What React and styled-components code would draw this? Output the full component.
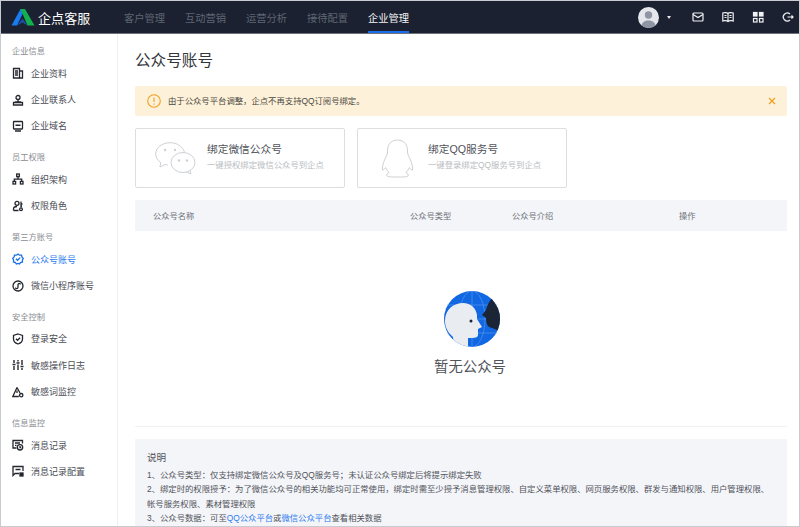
import React from "react";
import styled, { createGlobalStyle } from "styled-components";

const Global = createGlobalStyle`
  html, body { margin: 0; padding: 0; background: #fff; }
  * { box-sizing: border-box; }
  body { font-family: "Liberation Sans", "Noto Sans CJK SC", sans-serif; }
`;

const Frame = styled.div`
  width: 800px;
  height: 527px;
  border: 1px solid #c9cbd0;
  display: flex;
  flex-direction: column;
  overflow: hidden;
`;

const Header = styled.header`
  height: 33px;
  flex: none;
  background: #1b2130;
  display: flex;
  align-items: stretch;
  border-bottom: 1px solid #6d7079;
`;

const Brand = styled.div`
  width: 123px;
  display: flex;
  align-items: center;
  padding-left: 10px;
  gap: 3px;
  color: #fff;
  font-size: 13px;
  letter-spacing: 0.1px;
`;

const Nav = styled.nav`
  display: flex;
  gap: 20px;
`;

const NavItem = styled.div`
  display: flex;
  align-items: center;
  width: 41px;
  justify-content: center;
  font-size: 10.25px;
  white-space: nowrap;
  color: ${(p) => (p.$active ? "#f2f3f5" : "#5f6673")};
  box-shadow: ${(p) => (p.$active ? "inset 0 -2px 0 #1a6fe8" : "none")};
`;

const HeaderRight = styled.div`
  margin-left: auto;
  padding-right: 3px;
  display: flex;
  align-items: center;
  color: #fff;
`;

const Avatar = styled.div`
  width: 21px;
  height: 21px;
  border-radius: 50%;
  overflow: hidden;
  background: #e4e6ec;
`;

const Caret = styled.div`
  width: 0;
  height: 0;
  margin: 0 21px 0 8px;
  border-left: 2.5px solid transparent;
  border-right: 2.5px solid transparent;
  border-top: 3px solid #e8e8e8;
`;

const HeadIcon = styled.svg`
  width: 12px;
  height: 12px;
  margin-right: 18px;
  fill: none;
  stroke: #f0f1f3;
  stroke-width: 1.2;
  &:last-child { margin-right: 2px; }
`;

const Body = styled.div`
  flex: 1;
  min-height: 0;
  display: flex;
`;

const Sidebar = styled.aside`
  width: 117px;
  flex: none;
  border-right: 1px solid #eeeff2;
  padding-top: 8px;
`;

const Group = styled.section`
  margin-bottom: 9px;
`;

const GroupLabel = styled.div`
  height: 18px;
  line-height: 20px;
  padding-left: 11px;
  font-size: 8.25px;
  color: #8a8d94;
`;

const Item = styled.div`
  height: 26.4px;
  display: flex;
  align-items: center;
  gap: 7px;
  padding-left: 11px;
  font-size: 9px;
  color: ${(p) => (p.$active ? "#2f7cf0" : "#4a4d55")};
`;

const ItemIcon = styled.svg`
  width: 12px;
  height: 12px;
  flex: none;
  fill: none;
  stroke: ${(p) => (p.$active ? "#1a6fe8" : "#24272e")};
  stroke-width: 1.3;
`;

const Main = styled.main`
  flex: 1;
  min-width: 0;
  padding: 14px 12px 0 17px;
  display: flex;
  flex-direction: column;
`;

const Title = styled.h1`
  margin: 0;
  height: 25px;
  line-height: 25px;
  font-size: 15.6px;
  font-weight: 400;
  color: #33363d;
`;

const Alert = styled.div`
  margin-top: 13px;
  height: 30px;
  flex: none;
  background: #fdf1da;
  border-radius: 2px;
  display: flex;
  align-items: center;
  padding: 0 11px 0 12px;
  gap: 7px;
  font-size: 8.35px;
  color: #4a4840;
`;

const AlertText = styled.span`
  margin-top: -2px;
`;

const AlertClose = styled.svg`
  margin-left: auto;
  width: 8px;
  height: 8px;
  stroke: #f0a020;
  stroke-width: 1.3;
`;

const Cards = styled.div`
  margin-top: 12px;
  display: flex;
  gap: 12px;
`;

const Card = styled.div`
  width: 210px;
  height: 60px;
  border: 1px solid #dcdee2;
  border-radius: 2px;
  display: flex;
  align-items: center;
  padding-left: ${(p) => p.$pad}px;
  gap: ${(p) => p.$gap}px;
`;

const CardText = styled.div`
  padding-bottom: 4px;
`;

const CardTitle = styled.div`
  font-size: 10.7px;
  line-height: 15px;
  color: #50535a;
`;

const CardSub = styled.div`
  margin-top: 2px;
  font-size: 8.35px;
  line-height: 12px;
  color: #b9bcc2;
  white-space: nowrap;
`;

const TableHead = styled.div`
  margin-top: 12px;
  height: 31px;
  flex: none;
  background: #f4f5f9;
  display: grid;
  grid-template-columns: 257px 102px 167px 1fr;
  align-items: center;
  padding: 0 0 2px 18px;
  font-size: 8.25px;
  color: #6c6f76;
`;

const Empty = styled.div`
  height: 196px;
  flex: none;
  padding: 60px 0 0 18px;
  border-bottom: 1px solid #f0f1f4;
  display: flex;
  flex-direction: column;
  align-items: center;
`;

const GlobeArt = styled.svg`
  width: 56px;
  height: 56px;
  margin-left: 4px;
`;

const EmptyText = styled.div`
  margin-top: 10px;
  font-size: 14.4px;
  line-height: 20px;
  color: #50535a;
`;

const Notes = styled.div`
  margin-top: 12px;
  flex: 1;
  background: #f4f5f9;
  padding: 12px 14px 0 12px;
  font-size: 8.35px;
  line-height: 14.4px;
  color: #50535a;
`;

const NotesTitle = styled.div`
  font-size: 9.6px;
  line-height: 14px;
  margin-bottom: 3px;
`;

const Link = styled.span`
  color: #2f7cf0;
`;

const icons = {
  doc: <><path d="M1.5 1.5h6v9.5h-6z" /><path d="M7.5 4h3v7h-3M3 4h3M3 6h3M3 8h3" /></>,
  contact: <><circle cx="6" cy="3.500" r="2" /><path d="M3 8h6M1.500 11V8.500h9V11zM6 5.500V8" /></>,
  domain: <><rect x="1.500" y="1.500" width="9" height="7.500" rx="0.500" /><path d="M3.500 5.200h5M3 11h6" strokeWidth="1.600" /></>,
  org: <><rect x="4.700" y="1" width="2.600" height="2.600" /><rect x="1" y="8.400" width="2.600" height="2.600" /><rect x="8.400" y="8.400" width="2.600" height="2.600" /><path d="M6 3.600v2.600M2.300 8.400V6.200h7.400v2.200" /></>,
  role: <><circle cx="5" cy="3.300" r="2" /><path d="M1.500 10.500V9c0-1.500 1.500-2.500 3.500-2.500M1.500 10.500h5M9 1.500v6M9 4h1.500M9 6h1" /><circle cx="9" cy="9.300" r="1.400" /></>,
  account: <><path d="M6 1l1.500 1.200 2-.1.400 1.900 1.400 1.400L10.400 7l.1 2-1.900.5L7.400 11 6 10.400 4.300 11 3.400 9.500 1.500 9l.1-2L.7 5.400l1.400-1.400.4-1.900 2 .1z" /><path d="M4 5.800l1.500 1.500L8.200 4.600" /></>,
  mini: <><circle cx="6" cy="6" r="5" /><path d="M3.600 7.500c0 1.600 2.200 1.600 2.400 0V4.500c.2-1.600 2.400-1.600 2.400 0" /></>,
  shield: <><path d="M6 1l4.500 1.400V6c0 2.600-2 4.200-4.500 5-2.500-.8-4.500-2.400-4.500-5V2.400z" /><path d="M4 5.800l1.500 1.500 2.600-2.600" /></>,
  sliders: <path d="M2 1v3M2 7v4M6 1v1.500M6 5.500V11M10 1v5M10 9v2M.5 5.500h3M4.500 4h3M8.500 7.500h3" strokeWidth="1.400" />,
  warn: <><path d="M5 1.500L.8 10.500h6" /><path d="M5 1.500l3 5.500M5 4.500v2.500" /><circle cx="9.200" cy="9.200" r="1.700" /></>,
  record: <><path d="M4.500 9H1V1.500h9.500v3" /><path d="M3 4h5M3 6.300h1.500" /><circle cx="8" cy="8.300" r="2.700" /><path d="M8 7v1.500h1.200" /></>,
  config: <><path d="M7 8.500H3L1 10.500v-9h10V6" /><path d="M3.500 4.500h5" strokeWidth="1.500" /><rect x="8" y="8" width="3" height="3" fill="#24272e" /></>,
};

const groups = [
  { label: "企业信息", items: [["doc", "企业资料"], ["contact", "企业联系人"], ["domain", "企业域名"]] },
  { label: "员工权限", items: [["org", "组织架构"], ["role", "权限角色"]] },
  { label: "第三方账号", items: [["account", "公众号账号", true], ["mini", "微信小程序账号"]] },
  { label: "安全控制", items: [["shield", "登录安全"], ["sliders", "敏感操作日志"], ["warn", "敏感词监控"]] },
  { label: "信息监控", items: [["record", "消息记录"], ["config", "消息记录配置"]] },
];

const tabs = ["客户管理", "互动营销", "运营分析", "接待配置", "企业管理"];

const Logo = () => (
  <svg width="24" height="18" viewBox="0 0 24 18">
    <path d="M0.500 17.500L9.500 1h4.500L6 17.500z" fill="#1a7cf0" />
    <path d="M9.500 1h4.500l9.500 16.500h-7z" fill="#12b04f" />
    <path d="M6 17.500l5.500-7 5 7-5-3z" fill="#1c4fa8" />
  </svg>
);

const Globe = () => (
  <GlobeArt viewBox="0 0 56 56">
    <defs>
      <clipPath id="globe-clip"><circle cx="28" cy="28" r="28" /></clipPath>
    </defs>
    <circle cx="28" cy="28" r="28" fill="#1268e2" />
    <g fill="none" stroke="#5c9bf0" strokeWidth="0.6">
      <ellipse cx="28" cy="28" rx="13" ry="28" />
      <path d="M28 0v56M3 14h50M0 28h56M3 42h50" />
    </g>
    <g clipPath="url(#globe-clip)">
      <path d="M49 6C45 10 43 15 42 19L38 24L42 27C42 32 43 36 48 37L56 40V6Z" fill="#1c2536" />
      <path d="M10 57L9 46C3 41 1 35 1 30C1 18 10 12 19 12C27 12 32 17 33 24L33 28L38 36L34 38L34 44C34 46 32 47 28 47L24 47L24 57Z" fill="#e9ecf1" />
      <circle cx="27" cy="30" r="1.500" fill="#1c2536" />
    </g>
  </GlobeArt>
);

export default function App() {
  return (
    <Frame>
      <Global />
      <Header>
        <Brand><Logo />企点客服</Brand>
        <Nav>
          {tabs.map((t, i) => <NavItem key={t} $active={i === 4}>{t}</NavItem>)}
        </Nav>
        <HeaderRight>
          <Avatar>
            <svg width="21" height="21" viewBox="0 0 21 21">
              <circle cx="10.500" cy="8" r="3.700" fill="#8f95a3" />
              <path d="M3 21c0-5 3-7.500 7.500-7.500S18 16 18 21z" fill="#8f95a3" />
            </svg>
          </Avatar>
          <Caret />
          <HeadIcon viewBox="0 0 12 12"><rect x="1" y="2" width="10" height="8" rx="1" /><path d="M1 3.500l5 3 5-3" /></HeadIcon>
          <HeadIcon viewBox="0 0 12 12"><path d="M6 2.500C5 1.500 2 1.500.8 2v8c1.200-.5 4.200-.5 5.200.5 1-1 4-1 5.200-.5V2C10 1.500 7 1.500 6 2.500zM6 2.500v8M2.500 4.500h2M2.500 6.500h2M7.500 4.500h2M7.500 6.500h2" /></HeadIcon>
          <HeadIcon viewBox="0 0 12 12"><rect x="1.500" y="1.500" width="3.500" height="3.500" fill="#f0f1f3" /><rect x="7.500" y="1.500" width="3.500" height="3.500" fill="#f0f1f3" /><rect x="1.500" y="7.500" width="3.500" height="3.500" /><rect x="7.500" y="7.500" width="3.500" height="3.500" /></HeadIcon>
          <HeadIcon viewBox="0 0 12 12"><path d="M8 3a4 4 0 1 0 0 6M5.500 6H11M9.500 4.500L11 6 9.500 7.500" /></HeadIcon>
        </HeaderRight>
      </Header>
      <Body>
        <Sidebar>
          {groups.map((g) => (
            <Group key={g.label}>
              <GroupLabel>{g.label}</GroupLabel>
              {g.items.map(([icon, text, active]) => (
                <Item key={text} $active={active}>
                  <ItemIcon viewBox="0 0 12 12" $active={active}>{icons[icon]}</ItemIcon>
                  {text}
                </Item>
              ))}
            </Group>
          ))}
        </Sidebar>
        <Main>
          <Title>公众号账号</Title>
          <Alert>
            <svg width="14" height="14" viewBox="0 0 14 14" fill="none" stroke="#f0a020" strokeWidth="1.100">
              <circle cx="7" cy="7" r="6.300" />
              <path d="M7 3.500v4.500M7 9.500v1.200" />
            </svg>
            <AlertText>由于公众号平台调整，企点不再支持QQ订阅号绑定。</AlertText>
            <AlertClose viewBox="0 0 8 8"><path d="M1 1l6 6M7 1L1 7" /></AlertClose>
          </Alert>
          <Cards>
            <Card $pad={19} $gap={11}>
              <svg width="41" height="33" viewBox="0 0 41 33" fill="none" stroke="#cdd0d5" strokeWidth="1">
                <path d="M15 .7C7 .7.700 5.700.700 12c0 3.500 2 6.500 5 8.500L5 25l5-2.500c1 .3 2 .4 3 .5" />
                <path d="M29.500 10.500C28 4.500 22 .7 15 .7" />
                <ellipse cx="28" cy="20.500" rx="12" ry="10" fill="#fff" />
                <path d="M35 28.500l1 3.500-4.500-2" />
                <g fill="#cdd0d5" stroke="none">
                  <circle cx="10" cy="8" r="1.200" /><circle cx="20" cy="8" r="1.200" />
                  <circle cx="24" cy="18.500" r="1.200" /><circle cx="32" cy="18.500" r="1.200" />
                </g>
              </svg>
              <CardText>
                <CardTitle>绑定微信公众号</CardTitle>
                <CardSub>一键授权绑定微信公众号到企点</CardSub>
              </CardText>
            </Card>
            <Card $pad={23} $gap={14}>
              <svg width="33" height="39" viewBox="0 0 33 39" fill="none" stroke="#cdd0d5" strokeWidth="1">
                <path d="M16.500 1C9.500 1 6.500 6 6.500 12c0 3-.5 4-2.500 8-2 4-3 9-2.500 11 1 0 2-.7 3-2.500 1 2 2 3.500 3.500 5-2 1-2.500 2-2 3.500 1 1 4 1 10.500 1s9.500 0 10.500-1c.5-1.500 0-2.500-2-3.500 1.500-1.500 2.500-3 3.500-5 1 1.800 2 2.500 3 2.500.5-2-.5-7-2.500-11-2-4-2.500-5-2.500-8 0-6-3-11-10-11z" />
              </svg>
              <CardText>
                <CardTitle>绑定QQ服务号</CardTitle>
                <CardSub>一键登录绑定QQ服务号到企点</CardSub>
              </CardText>
            </Card>
          </Cards>
          <TableHead>
            <div>公众号名称</div>
            <div>公众号类型</div>
            <div>公众号介绍</div>
            <div>操作</div>
          </TableHead>
          <Empty>
            <Globe />
            <EmptyText>暂无公众号</EmptyText>
          </Empty>
          <Notes>
            <NotesTitle>说明</NotesTitle>
            <div>1、公众号类型：仅支持绑定微信公众号及QQ服务号；未认证公众号绑定后将提示绑定失败</div>
            <div>2、绑定时的权限授予：为了微信公众号的相关功能均可正常使用，绑定时需至少授予消息管理权限、自定义菜单权限、网页服务权限、群发与通知权限、用户管理权限、帐号服务权限、素材管理权限</div>
            <div>3、公众号数据：可至<Link>QQ公众平台</Link>或<Link>微信公众平台</Link>查看相关数据</div>
          </Notes>
        </Main>
      </Body>
    </Frame>
  );
}
